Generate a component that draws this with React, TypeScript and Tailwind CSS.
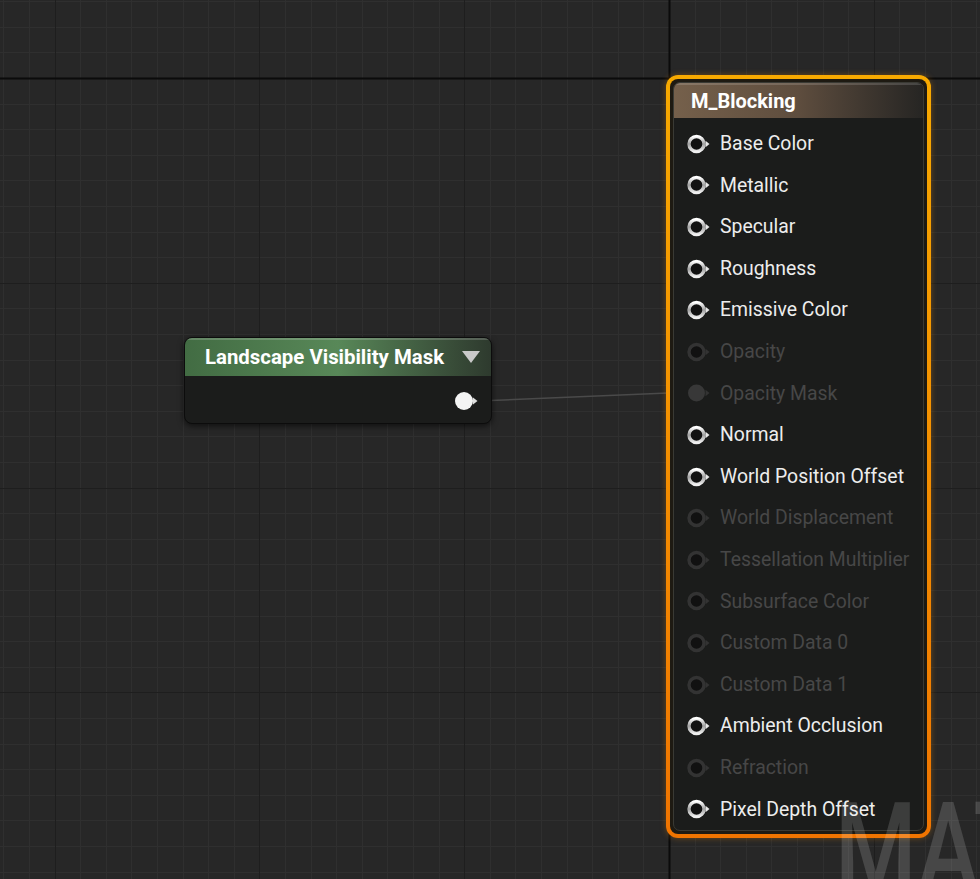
import React from "react";

const W = 980;
const H = 879;

function Grid() {
  const xs: { p: number; kind: number }[] = [];
  for (let k = 0; k < 40; k++) {
    const x = 3.4 + k * 25.6;
    if (x > W) break;
    const kind = k === 26 ? 2 : (k - 26) % 8 === 0 ? 1 : 0;
    xs.push({ p: Math.round(x) + 0.5, kind });
  }
  const ys: { p: number; kind: number }[] = [];
  for (let k = 0; k < 40; k++) {
    const y = 1.2 + k * 25.6;
    if (y > H) break;
    const kind = k === 3 ? 2 : (k - 3) % 8 === 0 ? 1 : 0;
    ys.push({ p: Math.round(y) + 0.5, kind });
  }
  const col = (k: number) => (k === 2 ? "#0b0b0b" : k === 1 ? "#1e1e1e" : "#2f2f2f");
  const sw = (k: number) => (k === 2 ? 2 : 1);
  return (
    <svg className="absolute inset-0" width={W} height={H}>
      {xs.filter(l => l.kind === 0).map((l, i) => (
        <line key={"xm" + i} x1={l.p} y1={0} x2={l.p} y2={H} stroke={col(0)} strokeWidth={1} />
      ))}
      {ys.filter(l => l.kind === 0).map((l, i) => (
        <line key={"ym" + i} x1={0} y1={l.p} x2={W} y2={l.p} stroke={col(0)} strokeWidth={1} />
      ))}
      {xs.filter(l => l.kind > 0).map((l, i) => (
        <line key={"xM" + i} x1={l.p} y1={0} x2={l.p} y2={H} stroke={col(l.kind)} strokeWidth={sw(l.kind)} />
      ))}
      {ys.filter(l => l.kind > 0).map((l, i) => (
        <line key={"yM" + i} x1={0} y1={l.p} x2={W} y2={l.p} stroke={col(l.kind)} strokeWidth={sw(l.kind)} />
      ))}
      <line x1={478} y1={401} x2={668} y2={393} stroke="#4a4a4a" strokeWidth={1.5} />
    </svg>
  );
}

function Pin({ mode }: { mode: "on" | "off" | "offFilled" }) {
  const on = mode === "on";
  return (
    <svg width="24" height="20" viewBox="0 0 24 20" className="shrink-0">
      <defs>
        <linearGradient id="ring" x1="0" y1="0" x2="0" y2="1">
          <stop offset="0" stopColor="#ffffff" />
          <stop offset="0.5" stopColor="#a0a0a0" />
          <stop offset="1" stopColor="#f0f0f0" />
        </linearGradient>
      </defs>
      {mode === "offFilled" ? (
        <circle cx="9.5" cy="10" r="8.5" fill="#383838" />
      ) : (
        <circle
          cx="9.5"
          cy="10"
          r="7.5"
          fill="#111111"
          stroke={on ? "url(#ring)" : "#333333"}
          strokeWidth="3.4"
        />
      )}
      <polygon points="18.5,6.8 22.5,10 18.5,13.2" fill={on ? "#e8e8e8" : "#333333"} />
    </svg>
  );
}

const rows: { label: string; mode: "on" | "off" | "offFilled" }[] = [
  { label: "Base Color", mode: "on" },
  { label: "Metallic", mode: "on" },
  { label: "Specular", mode: "on" },
  { label: "Roughness", mode: "on" },
  { label: "Emissive Color", mode: "on" },
  { label: "Opacity", mode: "off" },
  { label: "Opacity Mask", mode: "offFilled" },
  { label: "Normal", mode: "on" },
  { label: "World Position Offset", mode: "on" },
  { label: "World Displacement", mode: "off" },
  { label: "Tessellation Multiplier", mode: "off" },
  { label: "Subsurface Color", mode: "off" },
  { label: "Custom Data 0", mode: "off" },
  { label: "Custom Data 1", mode: "off" },
  { label: "Ambient Occlusion", mode: "on" },
  { label: "Refraction", mode: "off" },
  { label: "Pixel Depth Offset", mode: "on" },
];

function MaterialNode() {
  return (
    <div className="absolute left-[666px] top-[75px] w-[265px] h-[763px] rounded-[12px] bg-gradient-to-b from-[#f8aa00] to-[#f07400] p-[4px] shadow-[0_0_6px_rgba(240,140,0,0.35)]">
      <div className="w-full h-full rounded-[8px] bg-[#1e1a12] p-[3px]">
        <div className="w-full h-full rounded-[7px] bg-[#1b1c1b] border border-[#3a3a34] overflow-hidden flex flex-col">
          <div className="h-[35px] shrink-0 flex items-center pl-[17px] bg-gradient-to-r from-[#75604b] via-[#5e4d3e] to-[#262523] shadow-[inset_0_2px_0_rgba(255,255,255,0.15)]">
            <span className="text-[20px] font-bold text-white">M_Blocking</span>
          </div>
          <div className="flex flex-col pt-[5px]">
            {rows.map(r => (
              <div key={r.label} className="h-[41.6px] flex items-center pl-[13px] gap-[9px]">
                <Pin mode={r.mode} />
                <span
                  className={
                    "text-[19.4px] leading-none " +
                    (r.mode === "on" ? "text-[#ededed]" : "text-[#474747]")
                  }
                >
                  {r.label}
                </span>
              </div>
            ))}
          </div>
        </div>
      </div>
    </div>
  );
}

function LandscapeNode() {
  return (
    <div className="absolute left-[184px] top-[337px] w-[308px] h-[87px] rounded-[8px] bg-[#1b1c1b] border border-[#0c0c0c] shadow-[0_2px_6px_rgba(0,0,0,0.6)] overflow-hidden flex flex-col">
      <div className="h-[38px] shrink-0 flex items-center justify-between pl-[20px] pr-[10px] bg-gradient-to-r from-[#426c43] via-[#588858] to-[#2e3a2e] shadow-[inset_0_2px_0_rgba(255,255,255,0.18)]">
        <span className="text-[20.4px] font-bold text-white pt-[1px]">Landscape Visibility Mask</span>
        <svg width="20" height="14" viewBox="0 0 20 14">
          <polygon points="1,1 19,1 10,13" fill="#c9c9c9" />
        </svg>
      </div>
      <div className="flex-1 flex items-center justify-end pr-[12px] pt-[2px]">
        <svg width="24" height="20" viewBox="0 0 24 20">
          <circle cx="9" cy="10" r="9" fill="#f4f4f4" />
          <polygon points="18,6.5 22.5,10 18,13.5" fill="#e0e0e0" />
        </svg>
      </div>
    </div>
  );
}

export default function App() {
  return (
    <div
      className="relative w-[980px] h-[879px] overflow-hidden bg-[#272727]"
      style={{ fontFamily: "Roboto, 'Liberation Sans', sans-serif" }}
    >
      <Grid />
      <LandscapeNode />
      <MaterialNode />
      <div className="absolute left-[835px] top-[786px] text-[126px] font-medium leading-none text-white/[0.15] origin-left scale-x-[0.74] whitespace-nowrap pointer-events-none">
        MATERIAL
      </div>
    </div>
  );
}
